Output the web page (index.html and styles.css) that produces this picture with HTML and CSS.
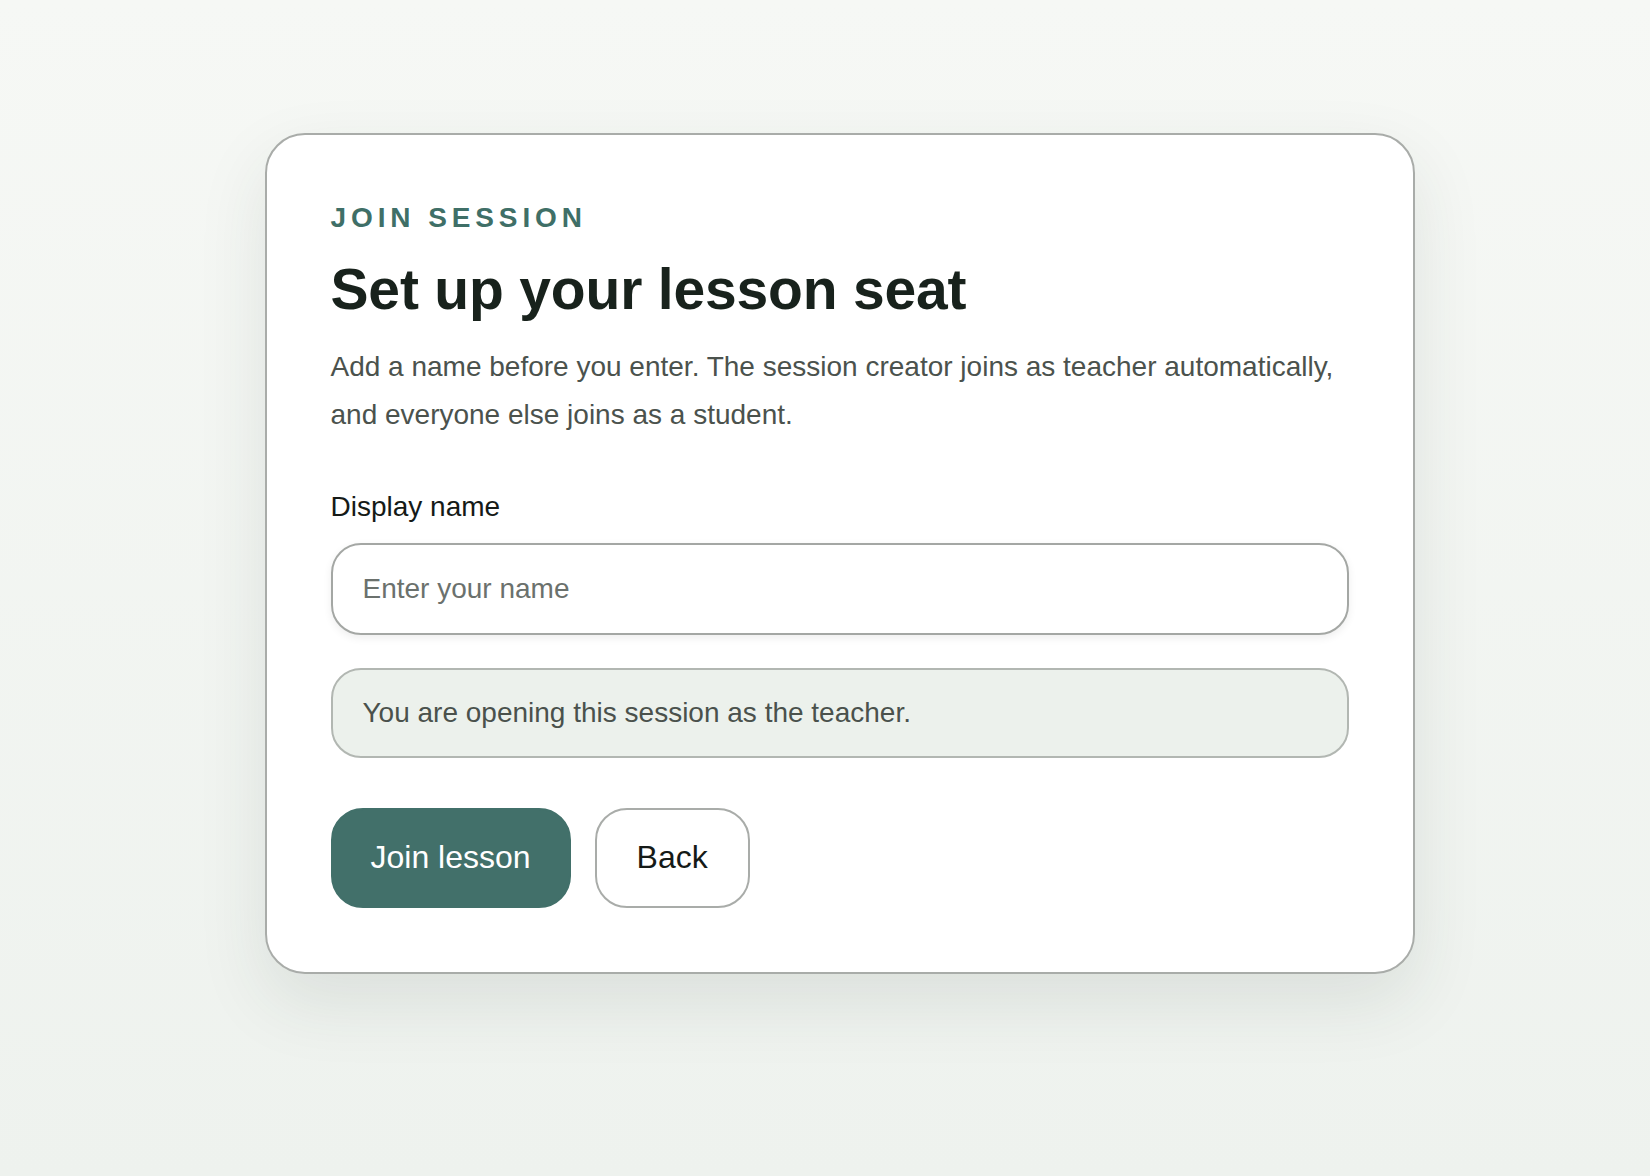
FILE: index.html
```html
<!DOCTYPE html>
<html lang="en">
<head>
<meta charset="utf-8">
<title>Join session</title>
<link rel="stylesheet" href="styles.css">
</head>
<body>
<main class="page">
  <section class="card">
    <p class="eyebrow">Join session</p>
    <h1 class="title">Set up your lesson seat</h1>
    <p class="lead">Add a name before you enter. The session creator joins as teacher automatically, and everyone else joins as a student.</p>
    <label class="field">
      <span class="label">Display name</span>
      <input class="input" type="text" placeholder="Enter your name">
    </label>
    <div class="notice">You are opening this session as the teacher.</div>
    <div class="actions">
      <button class="btn btn-primary" type="button">Join lesson</button>
      <button class="btn" type="button">Back</button>
    </div>
  </section>
</main>
</body>
</html>
```
FILE: styles.css
```css
html, body {
  margin: 0;
  padding: 0;
}

body {
  min-height: 100vh;
  background: linear-gradient(180deg, #f6f8f5 0%, #eef2ee 100%);
  font-family: "Liberation Sans", Arial, Helvetica, sans-serif;
}

.page {
  display: flex;
  justify-content: center;
  align-items: flex-start;
  box-sizing: border-box;
  min-height: 100vh;
  padding: 133px 0 0 29px;
}

.card {
  width: 1150px;
  box-sizing: border-box;
  background: #ffffff;
  border: 2px solid #a9aca9;
  border-radius: 40px;
  padding: 64px;
  box-shadow: 0 28px 70px rgba(38, 60, 48, 0.10);
}

.eyebrow {
  margin: 0 0 21px;
  font-size: 28px;
  line-height: 1.35;
  font-weight: 700;
  letter-spacing: 0.175em;
  text-transform: uppercase;
  color: #3f6f67;
}

.title {
  margin: 0 0 23px;
  font-size: 57px;
  line-height: 1.1;
  font-weight: 700;
  letter-spacing: -0.003em;
  color: #18221c;
}

.lead {
  margin: 0 0 48px;
  font-size: 28px;
  line-height: 1.7;
  color: #4b524d;
}

.field {
  display: flex;
  flex-direction: column;
  gap: 17px;
}

.label {
  font-size: 28px;
  line-height: 1.4;
  color: #151a17;
}

.input {
  height: 92px;
  box-sizing: border-box;
  border: 2px solid #a4a7a4;
  border-radius: 30px;
  padding: 0 30px;
  font: inherit;
  font-size: 28px;
  color: #151a17;
  background: #ffffff;
  box-shadow: 0 3px 8px rgba(0, 0, 0, 0.07);
  outline: none;
}

.input::placeholder {
  color: #6b716d;
  opacity: 1;
}

.notice {
  margin-top: 33px;
  box-sizing: border-box;
  height: 90px;
  display: flex;
  align-items: center;
  padding: 0 30px;
  border: 2px solid #b2b7b2;
  border-radius: 30px;
  background: #ecf1ec;
  font-size: 28px;
  line-height: 1.4;
  color: #4a514c;
}

.actions {
  display: flex;
  gap: 24px;
  margin-top: 50px;
}

.btn {
  height: 100px;
  box-sizing: border-box;
  padding: 0 40px;
  border-radius: 32px;
  border: 2px solid #a9aca9;
  background: #ffffff;
  color: #151a17;
  font: inherit;
  font-size: 32px;
  cursor: pointer;
}

.btn-primary {
  padding: 0 38px;
  background: #42706a;
  border-color: #42706a;
  color: #ffffff;
}
```
